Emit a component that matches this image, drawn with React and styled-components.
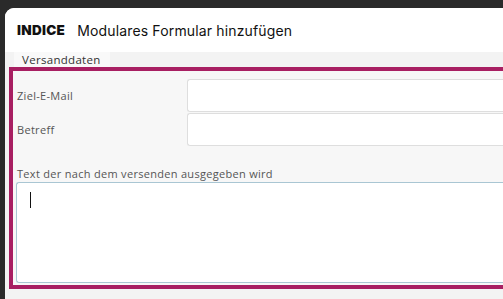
import React from "react";
import styled, { createGlobalStyle } from "styled-components";

const Global = createGlobalStyle`
  html, body { margin: 0; padding: 0; background: #2a2a2a; overflow: hidden; }
  body { font-family: "Open Sans", "Noto Sans", sans-serif; }
`;

const Page = styled.div`
  height: 299px;
  padding: 8px 0 0 5px;
  box-sizing: border-box;
  overflow: hidden;
`;

const Modal = styled.div`
  background: #f3f3f3;
  border-top-left-radius: 9px;
  height: 320px;
  overflow: hidden;
`;

const Header = styled.div`
  background: #ffffff;
  height: 44px;
  display: flex;
  align-items: center;
  padding-left: 12px;
  gap: 12px;
  color: #111;
`;

const Brand = styled.span`
  font-family: "Inter", sans-serif;
  font-weight: 900;
  font-size: 13.5px;
  letter-spacing: 0.3px;
`;

const Title = styled.span`
  font-family: "Inter", sans-serif;
  font-size: 14px;
  font-weight: 400;
  letter-spacing: 0.15px;
`;

const Body = styled.div`
  padding-left: 4px;
`;

const SectionTitle = styled.div`
  width: fit-content;
  background: #f9f9f9;
  color: #333;
  font-size: 11.5px;
  letter-spacing: 0.3px;
  line-height: 15px;
  padding: 0 9px 0 8px;
  margin-left: 5px;
`;

const Frame = styled.div`
  border: 4px solid #a81f62;
  border-right: none;
  background: #f7f7f7;
  padding: 8px 0 2px 4px;
`;

const Row = styled.div`
  display: grid;
  grid-template-columns: 170px 1fr;
  align-items: center;
`;

const Label = styled.div`
  color: #555;
  font-size: 11px;
  letter-spacing: 0.3px;
`;

const Input = styled.div`
  height: 33px;
  background: #fff;
  border: 1px solid #dedede;
  border-right: none;
  border-radius: 3px 0 0 3px;
  box-sizing: border-box;
`;

const Stack = styled.div`
  display: flex;
  flex-direction: column;
  gap: 1px;
`;

const AreaLabel = styled.div`
  color: #555;
  font-size: 11px;
  letter-spacing: 0.3px;
  line-height: 15px;
  margin-top: 20px;
  margin-bottom: 1px;
`;

const TextArea = styled.div`
  height: 101px;
  margin-left: -1px;
  background: #fff;
  border: 1px solid #a9c6d3;
  border-right: none;
  border-radius: 3px 0 0 3px;
  box-sizing: border-box;
  padding: 9px 0 0 13px;
`;

const Caret = styled.div`
  width: 1px;
  height: 16px;
  background: #111;
`;

const NextTitle = styled.div`
  color: #333;
  font-size: 11.5px;
  letter-spacing: 0.3px;
  margin: 6px 0 0 13px;
  line-height: 15px;
`;

export default function App() {
  return (
    <>
      <Global />
      <Page>
        <Modal>
          <Header>
            <Brand>INDICE</Brand>
            <Title>Modulares Formular hinzufügen</Title>
          </Header>
          <Body>
            <SectionTitle>Versanddaten</SectionTitle>
            <Frame>
              <Stack>
                <Row>
                  <Label>Ziel-E-Mail</Label>
                  <Input />
                </Row>
                <Row>
                  <Label>Betreff</Label>
                  <Input />
                </Row>
              </Stack>
              <AreaLabel>Text der nach dem versenden ausgegeben wird</AreaLabel>
              <TextArea>
                <Caret />
              </TextArea>
            </Frame>
            <NextTitle>Bestätigungsnachricht für Anwender</NextTitle>
          </Body>
        </Modal>
      </Page>
    </>
  );
}
